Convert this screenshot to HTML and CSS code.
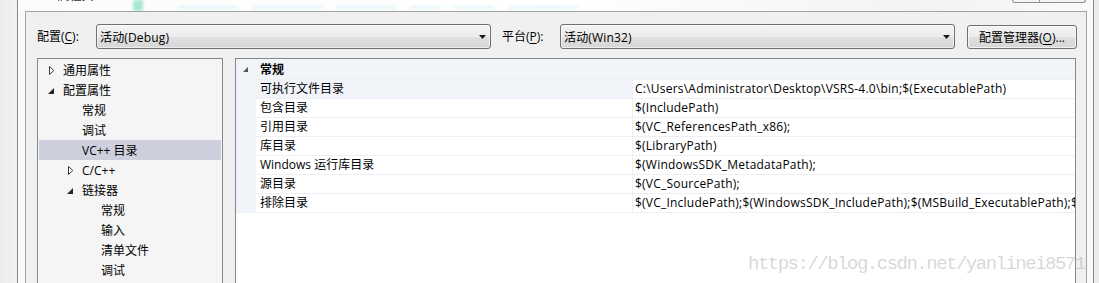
FILE: index.html
```html
<!DOCTYPE html>
<html>
<head>
<meta charset="utf-8">
<link rel="stylesheet" href="styles.css">
</head>
<body>
<div class="screen">
  <div class="desk"></div>
  <div class="window">
    <div class="titlebar">
      <span class="title">VSRS 属性页</span>
      <span class="glass-a"></span>
      <span class="glass-b">
        <span class="blob w60"></span><span class="blob w70"></span><span class="blob w60"></span><span class="blob w30"></span><span class="blob w40"></span><span class="blob w70"></span>
      </span>
      <span class="caption-btns"><span class="cb"></span><span class="cb cb-last"></span></span>
    </div>
    <div class="frame">
      <div class="client">
        <div class="toolbar">
          <span class="lbl lbl-conf">配置(<u>C</u>):</span>
          <div class="combo"><span class="combo-text">活动(Debug)</span><svg class="drop" width="7" height="4" viewBox="0 0 7 4"><polygon points="0,0 7,0 3.5,4" fill="#1a1a1a"/></svg></div>
          <span class="lbl lbl-plat">平台(<u>P</u>):</span>
          <div class="combo"><span class="combo-text">活动(Win32)</span><svg class="drop" width="7" height="4" viewBox="0 0 7 4"><polygon points="0,0 7,0 3.5,4" fill="#1a1a1a"/></svg></div>
          <div class="btn">配置管理器(<u>O</u>)...</div>
        </div>
        <div class="panes">
          <div class="tree">
            <div class="node l0"><span class="tw"><svg class="tri-c" width="6" height="9" viewBox="0 0 6 9"><polygon points="0.5,0.5 4.8,4.5 0.5,8.5" fill="#fff" stroke="#3a3a3a" stroke-width="1"/></svg></span><span>通用属性</span></div>
            <div class="node l0"><span class="tw"><svg class="tri-e" width="6" height="6" viewBox="0 0 6 6"><polygon points="6,0 6,6 0,6" fill="#262626"/></svg></span><span>配置属性</span></div>
            <div class="node l1"><span class="tw"></span><span>常规</span></div>
            <div class="node l1"><span class="tw"></span><span>调试</span></div>
            <div class="node l1 sel"><span class="tw"></span><span>VC++ 目录</span></div>
            <div class="node l1"><span class="tw"><svg class="tri-c" width="6" height="9" viewBox="0 0 6 9"><polygon points="0.5,0.5 4.8,4.5 0.5,8.5" fill="#fff" stroke="#3a3a3a" stroke-width="1"/></svg></span><span>C/C++</span></div>
            <div class="node l1"><span class="tw"><svg class="tri-e" width="6" height="6" viewBox="0 0 6 6"><polygon points="6,0 6,6 0,6" fill="#262626"/></svg></span><span>链接器</span></div>
            <div class="node l2"><span class="tw"></span><span>常规</span></div>
            <div class="node l2"><span class="tw"></span><span>输入</span></div>
            <div class="node l2"><span class="tw"></span><span>清单文件</span></div>
            <div class="node l2"><span class="tw"></span><span>调试</span></div>
          </div>
          <div class="grid">
            <div class="cat">
              <span class="gut"><svg class="cat-tri" width="5" height="5" viewBox="0 0 5 5"><polygon points="5,0 5,5 0,5" fill="#555"/></svg></span>
              <span class="cat-name">常规</span>
            </div>
            <div class="prow first"><span class="gut"></span><span class="pname">可执行文件目录</span><span class="pval">C:\Users\Administrator\Desktop\VSRS-4.0\bin;$(ExecutablePath)</span></div>
            <div class="prow"><span class="gut"></span><span class="pname">包含目录</span><span class="pval">$(IncludePath)</span></div>
            <div class="prow"><span class="gut"></span><span class="pname">引用目录</span><span class="pval">$(VC_ReferencesPath_x86);</span></div>
            <div class="prow"><span class="gut"></span><span class="pname">库目录</span><span class="pval">$(LibraryPath)</span></div>
            <div class="prow"><span class="gut"></span><span class="pname">Windows 运行库目录</span><span class="pval">$(WindowsSDK_MetadataPath);</span></div>
            <div class="prow"><span class="gut"></span><span class="pname">源目录</span><span class="pval">$(VC_SourcePath);</span></div>
            <div class="prow last"><span class="gut"></span><span class="pname">排除目录</span><span class="pval">$(VC_IncludePath);$(WindowsSDK_IncludePath);$(MSBuild_ExecutablePath);$(VC_LibraryPath_x86);</span></div>
          </div>
        </div>
      </div>
    </div>
  </div>
  <div class="desk desk-r"></div>
</div>
<div class="watermark">https://blog.csdn.net/yanlinei8571</div>
</body>
</html>
```

FILE: styles.css
```css
* { box-sizing: border-box; }
html, body { margin: 0; padding: 0; }
body {
  width: 1099px;
  height: 283px;
  overflow: hidden;
  position: relative;
  background: #eeeeee;
  font-family: "Open Sans", "Noto Sans CJK SC", sans-serif;
  font-size: 12px;
  color: #000;
}
u { text-decoration: underline; text-underline-offset: 2px; }

.screen { display: flex; height: 283px; }
.desk { width: 17px; flex: none; background: linear-gradient(90deg, #ececec, #f2f2f2); }
.desk-r { width: 5px; background: #ececec; }

.window {
  width: 1077px;
  flex: none;
  display: flex;
  flex-direction: column;
  border-left: 1px solid #8a8a8a;
  border-right: 1px solid #8a8a8a;
  background: #f8f8f8;
}

.titlebar {
  height: 11px;
  flex: none;
  display: flex;
  align-items: flex-start;
  overflow: hidden;
  background: linear-gradient(90deg, #fcfcfc 0%, #ffffff 50%, #f3f3f3 85%, #fafafa 100%);
}
.title {
  width: 70px;
  margin-left: 9px;
  margin-top: -10px;
  line-height: 12px;
  font-size: 12px;
  color: #222;
  white-space: nowrap;
  filter: blur(0.4px);
  flex: none;
}
.glass-a {
  width: 10px;
  height: 11px;
  margin-left: 36px;
  background: #a6e8d0;
  filter: blur(1.5px);
  flex: none;
}
.glass-b {
  margin-left: 35px;
  margin-top: 6px;
  display: flex;
  gap: 14px;
  flex: none;
}
.blob {
  height: 3px;
  background: #e2f5f8;
  filter: blur(1.4px);
  border-radius: 2px;
}
.w30 { width: 30px; }
.w40 { width: 40px; }
.w60 { width: 60px; }
.w70 { width: 70px; }

.caption-btns {
  margin-left: auto;
  margin-right: 7px;
  width: 74px;
  height: 3px;
  display: flex;
  flex: none;
  border: 1px solid #8f8f8f;
  border-top: none;
  border-radius: 0 0 3px 3px;
  background: #f4f4f4;
}
.cb { width: 27px; border-right: 1px solid #9a9a9a; }
.cb-last { flex: 1; border-right: none; }

.frame {
  flex: 1;
  display: flex;
  padding: 0 6px 0 7px;
  min-height: 0;
}
.client {
  flex: 1;
  display: flex;
  flex-direction: column;
  border: 1px solid #a3a3a3;
  border-bottom: none;
  background: #f0f0f0;
  min-height: 0;
}

.toolbar {
  display: flex;
  align-items: flex-start;
  padding: 12px 0 0 11px;
  height: 37px;
  flex: none;
}
.lbl {
  display: block;
  line-height: 25px;
  height: 25px;
  white-space: nowrap;
  flex: none;
}
.lbl-conf { width: 59px; }
.lbl-plat { width: 58px; margin-left: 11px; }
.combo {
  width: 395px;
  height: 25px;
  flex: none;
  display: flex;
  align-items: center;
  padding-left: 3px;
  border: 1px solid #707070;
  border-radius: 3px;
  background: linear-gradient(#f3f3f3 0%, #ececec 50%, #e0e0e0 51%, #d6d6d6 100%);
  box-shadow: inset 0 0 0 1px rgba(255,255,255,0.55);
}
.combo-text { white-space: nowrap; letter-spacing: 0.15px; }
.drop { margin-left: auto; margin-right: 4px; margin-top: 1px; flex: none; }
.btn {
  width: 110px;
  height: 24px;
  margin-left: 12px;
  margin-top: 1px;
  flex: none;
  display: flex;
  align-items: center;
  justify-content: center;
  border: 1px solid #707070;
  border-radius: 3px;
  background: linear-gradient(#f3f3f3 0%, #ececec 50%, #e0e0e0 51%, #d6d6d6 100%);
  box-shadow: inset 0 0 0 1px rgba(255,255,255,0.7);
  white-space: nowrap;
}

.panes {
  flex: 1;
  display: flex;
  gap: 12px;
  padding-left: 11px;
  margin-top: 9px;
  min-height: 0;
}

.tree {
  width: 186px;
  flex: none;
  border: 1px solid #828790;
  border-bottom: none;
  background: #f5f5f5;
  padding: 1px;
}
.node {
  height: 20px;
  display: flex;
  align-items: center;
  padding-left: 8px;
  white-space: nowrap;
}
.node.l1 { padding-left: 27px; }
.node.l2 { padding-left: 46px; }
.node.sel { background: #cdd0dc; }
.tw { width: 16px; flex: none; display: flex; align-items: center; }
.tri-c { margin-left: 2px; }
.tri-e { margin-left: 1px; margin-top: 1px; }

.grid {
  width: 841px;
  flex: none;
  border: 1px solid #828790;
  border-bottom: none;
  background: #ffffff;
}
.cat {
  height: 20px;
  display: flex;
  align-items: center;
  background: #f1f4f9;
}
.gut {
  width: 20px;
  flex: none;
  align-self: stretch;
  background: #f1f4f9;
  display: flex;
  align-items: center;
}
.cat-tri { margin-left: 7px; }
.cat-name { font-weight: bold; padding-left: 4px; }
.prow {
  height: 19px;
  display: flex;
}
.pname, .pval {
  border-top: 1px solid #eceff3;
  line-height: 18px;
  white-space: nowrap;
  overflow: hidden;
}
.prow.last .pname, .prow.last .pval { border-bottom: 1px solid #eceff3; height: 20px; }
.prow.last { height: 20px; }
.pname {
  width: 377px;
  flex: none;
  padding-left: 4px;
  border-right: 1px solid #eceff3;
}
.prow.first .pname { background: #f1f4f9; }
.pval {
  flex: 1;
  padding-left: 2px;
  letter-spacing: 0.22px;
}

.watermark {
  position: absolute;
  left: 748px;
  top: 255px;
  font-family: "Liberation Mono", monospace;
  font-size: 19px;
  line-height: 19px;
  letter-spacing: -1.5px;
  color: rgba(150, 150, 150, 0.38);
  white-space: nowrap;
}
```
